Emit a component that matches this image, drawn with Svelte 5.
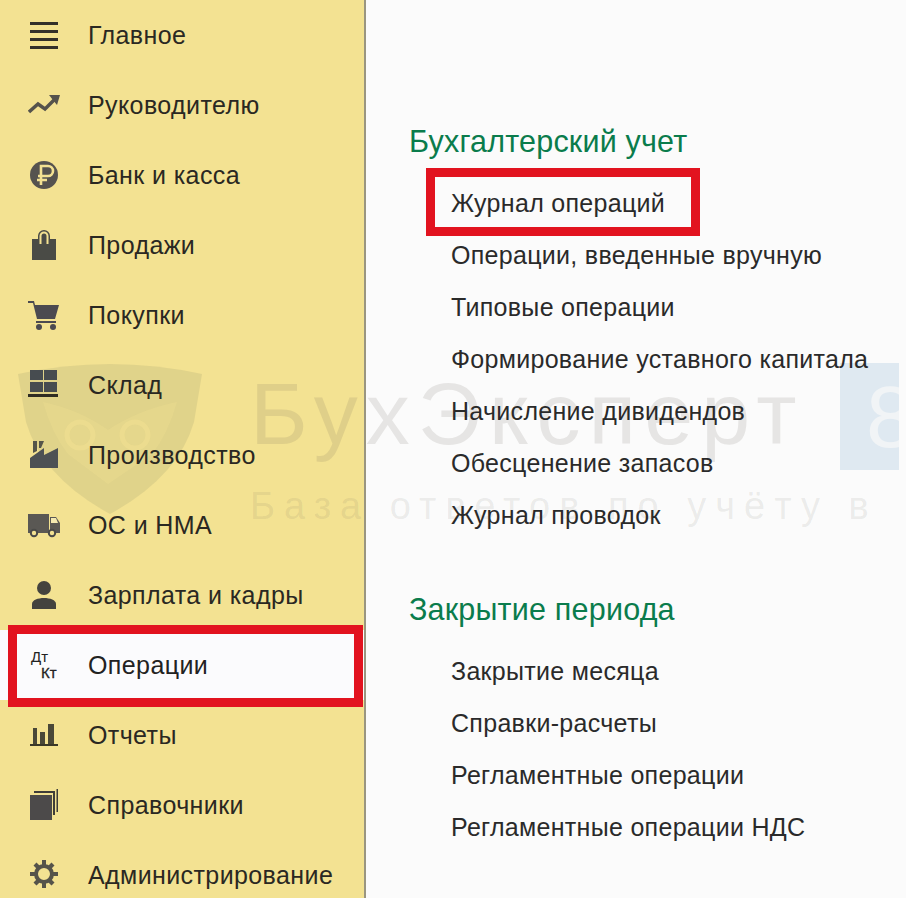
<script>
  const menu = [
    { icon: "home", label: "Главное" },
    { icon: "trend", label: "Руководителю" },
    { icon: "bank", label: "Банк и касса" },
    { icon: "bag", label: "Продажи" },
    { icon: "cart", label: "Покупки" },
    { icon: "stock", label: "Склад" },
    { icon: "plant", label: "Производство" },
    { icon: "truck", label: "ОС и НМА" },
    { icon: "person", label: "Зарплата и кадры" },
    { icon: "dtkt", label: "Операции", active: true },
    { icon: "bars", label: "Отчеты" },
    { icon: "books", label: "Справочники" },
    { icon: "gear", label: "Администрирование" }
  ];

  const groups = [
    {
      title: "Бухгалтерский учет",
      links: [
        "Журнал операций",
        "Операции, введенные вручную",
        "Типовые операции",
        "Формирование уставного капитала",
        "Начисление дивидендов",
        "Обесценение запасов",
        "Журнал проводок"
      ]
    },
    {
      title: "Закрытие периода",
      links: [
        "Закрытие месяца",
        "Справки-расчеты",
        "Регламентные операции",
        "Регламентные операции НДС"
      ]
    }
  ];
</script>

<div class="page">
  <aside class="sidebar">
    {#each menu as item}
      <div class="row" class:active={item.active}>
        <span class="icon">
          {#if item.icon === "dtkt"}
            <span class="dt">Дт</span>
            <span class="kt">Кт</span>
          {:else}
            <svg width="32" height="32" viewBox="0 0 32 32" fill="#4a4a48">
              {#if item.icon === "home"}
                <path d="M2 3h28v3H2zM2 11h28v3H2zM2 19h28v3H2zM2 27h28v3H2z" fill="#33302a" />
              {:else if item.icon === "trend"}
                <path d="M1 23l9-8 7 5 9-9" fill="none" stroke="#55534c" stroke-width="3.4" />
                <path d="M21 6h11l-3 10z" fill="#55534c" />
              {:else if item.icon === "bank"}
                <circle cx="16" cy="16" r="14" fill="#55534f" />
                <path d="M13 26V7h7a4.5 4.5 0 0 1 0 10h-10M9 21h10" fill="none" stroke="#f3e292" stroke-width="2.6" />
              {:else if item.icon === "bag"}
                <path d="M4 10h6V7a6 6 0 0 1 12 0v3h6v21H4z" fill="#4a4b46" />
                <path d="M12.5 15V7a3.5 3.5 0 0 1 7 0v8" fill="none" stroke="#f3e292" stroke-width="2" />
              {:else if item.icon === "cart"}
                <path d="M0 2h6l1 4h24l-4 14H9L5 4H0z" fill="#4b4a50" />
                <path d="M8 22h20v2H8z" fill="#4b4a50" />
                <circle cx="11" cy="28" r="3" fill="#4b4a50" />
                <circle cx="25" cy="28" r="3" fill="#4b4a50" />
              {:else if item.icon === "stock"}
                <path d="M2 1h13v10H2zM16 1h13v10H16zM2 13h13v10H2zM16 13h13v10H16z" fill="#474c50" />
                <path d="M0 25h30v3H0z" fill="#2f2c22" />
              {:else if item.icon === "plant"}
                <path d="M2 29V19L16 9v7l14-7v20z" fill="#4d5154" />
                <path d="M5 2h4v10l-4 2zM11 2h5l-3 7h-2z" fill="#55554a" />
              {:else if item.icon === "truck"}
                <path d="M0 5h21v19H0z" fill="#5a5854" />
                <path d="M22 8h6l4 6v10H22z" fill="#5a5854" />
                <path d="M23 9h5l2 5h-7z" fill="#f4e9b0" />
                <circle cx="6" cy="24" r="3.2" fill="#f3e292" stroke="#4a4a48" stroke-width="2" />
                <circle cx="24" cy="24" r="3.2" fill="#f3e292" stroke="#4a4a48" stroke-width="2" />
              {:else if item.icon === "person"}
                <circle cx="16" cy="9" r="7" fill="#44433e" />
                <path d="M4 30v-5c0-4 6-6 12-6s12 2 12 6v5z" fill="#44433e" />
              {:else if item.icon === "bars"}
                <path d="M5 9h4v16H5zM12 13h5v12h-5zM20 5h6v20h-6z" fill="#4a4838" />
                <path d="M2 25h28v2H2z" fill="#3a3828" />
              {:else if item.icon === "books"}
                <path d="M2 6h22v25H2z" fill="#4c4a4a" />
                <path d="M6 4V2h21v24h-2V4zM10 0V-1h20v24h-1.500V0z" fill="#3f3d38" />
              {:else if item.icon === "gear"}
                <circle cx="16" cy="15" r="8" fill="none" stroke="#55534a" stroke-width="4" />
                <path d="M14 1h4v5h-4zM14 24h4v5h-4zM2 13h5v4H2zM25 13h5v4h-5zM5.500 6.500l3-3 3.500 3.500-3 3zM23.500 3.500l3 3-3.500 3.500-3-3zM5.500 23.500l3.500-3.500 3 3-3.500 3.500zM20 23l3-3 3.500 3.500-3 3z" fill="#55534a" />
              {/if}
            </svg>
          {/if}
        </span>
        <span class="label">{item.label}</span>
      </div>
    {/each}
  </aside>

  <main class="content">
    {#each groups as group, g}
      <section class="group">
        <h2>{group.title}</h2>
        {#each group.links as link, i}
          <div class="link" class:marked={g === 0 && i === 0}>{link}</div>
        {/each}
      </section>
    {/each}
  </main>

  <div class="watermark" aria-hidden="true">
    <svg class="shield" width="184" height="155" viewBox="0 0 184 155">
      <path d="M0 12Q92 -8 184 12L176 60Q160 115 92 152Q24 115 8 60z" fill="#6f7b5a" opacity="0.14" />
      <path d="M25 40Q62 48 90 68Q120 48 159 40Q150 72 134 92L90 122L50 92Q34 72 25 40z" fill="#f3e292" opacity="0.3" />
      <circle cx="62" cy="73" r="13" fill="none" stroke="#f3e292" stroke-width="5" opacity="0.5" />
      <circle cx="117" cy="73" r="13" fill="none" stroke="#f3e292" stroke-width="5" opacity="0.5" />
    </svg>
    <div class="wm-name">БухЭксперт</div>
    <div class="wm-sub">База ответов по учёту в</div>
    <div class="wm-badge"><span>8</span></div>
  </div>
</div>

<style>
  :global(body) {
    margin: 0;
    background: #fbfbfb;
  }

  .page {
    position: relative;
    display: flex;
    width: 906px;
    height: 898px;
    overflow: hidden;
    font-family: "Liberation Sans", Arial, sans-serif;
    background: #fbfbfb;
  }

  .sidebar {
    flex: none;
    width: 364px;
    height: 898px;
    background: #f3e292;
    border-right: 2px solid #9a9680;
  }

  .row {
    position: relative;
    z-index: 2;
    display: flex;
    align-items: center;
    height: 70px;
    color: #2a2822;
  }

  .row.active {
    background: #fbfbfd;
    color: #222;
  }

  .row.active::after {
    content: "";
    position: absolute;
    left: 8px;
    right: 1px;
    top: -5px;
    bottom: -7px;
    border: 9px solid #e2131f;
  }

  .icon {
    position: relative;
    flex: none;
    display: flex;
    align-items: center;
    justify-content: center;
    width: 32px;
    height: 32px;
    margin-left: 28px;
    margin-right: 28px;
  }

  .dt,
  .kt {
    position: absolute;
    line-height: 16px;
    color: #222;
  }

  .dt {
    left: 3px;
    top: 0;
    font-size: 15px;
    font-style: normal;
  }

  .kt {
    left: 13px;
    top: 16px;
    font-size: 15px;
    -webkit-text-stroke: 0.3px #222;
  }

  .label {
    font-size: 25px;
    letter-spacing: 0.4px;
    white-space: nowrap;
  }

  .content {
    position: relative;
    z-index: 2;
    flex: 1;
    padding-top: 120px;
    padding-left: 43px;
  }

  .group {
    margin-bottom: 47px;
  }

  h2 {
    margin: 0 0 15px;
    height: 42px;
    font-size: 30.5px;
    line-height: 42px;
    font-weight: 400;
    letter-spacing: 0.2px;
    color: #0a7c4c;
    white-space: nowrap;
  }

  .link {
    position: relative;
    height: 52px;
    padding-left: 42px;
    font-size: 25px;
    line-height: 52px;
    letter-spacing: 0.3px;
    color: #2a2a2a;
    white-space: nowrap;
  }

  .link.marked::after {
    content: "";
    position: absolute;
    left: 17px;
    top: -9px;
    width: 256px;
    height: 50px;
    border: 9px solid #e2131f;
  }

  .watermark {
    position: absolute;
    inset: 0;
    z-index: 1;
    pointer-events: none;
  }

  .shield {
    position: absolute;
    left: 18px;
    top: 362px;
  }

  .wm-name {
    position: absolute;
    left: 250px;
    top: 362px;
    font-size: 88px;
    line-height: 104px;
    letter-spacing: 8px;
    color: rgba(90, 85, 80, 0.13);
    white-space: nowrap;
  }

  .wm-sub {
    position: absolute;
    left: 250px;
    top: 484px;
    font-size: 38px;
    line-height: 44px;
    letter-spacing: 9px;
    color: rgba(100, 95, 85, 0.11);
    white-space: nowrap;
  }

  .wm-badge {
    position: absolute;
    left: 840px;
    top: 363px;
    width: 59px;
    height: 107px;
    padding-left: 26px;
    box-sizing: border-box;
    background: #dfe9f1;
    color: #f1f4f6;
    font-size: 88px;
    line-height: 107px;
    overflow: hidden;
  }
</style>
